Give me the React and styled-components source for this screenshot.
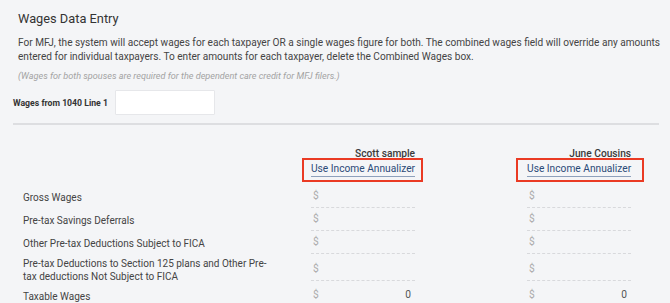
import React from "react";
import styled, { createGlobalStyle } from "styled-components";

const Global = createGlobalStyle`
  html, body { margin: 0; padding: 0; background: #f4f5f7; }
  body { font-family: Roboto, "Liberation Sans", Arial, sans-serif; color: #3b3b3b; }
`;

const Page = styled.div`
  width: 670px;
  height: 303px;
  overflow: hidden;
  box-sizing: border-box;
  padding: 11px 2px 0 13px;
  background: #f4f5f7;
`;

const Intro = styled.div`
  padding-left: 5px;
`;

const Title = styled.h1`
  margin: 0;
  font-size: 12.8px;
  line-height: 16px;
  font-weight: 400;
  color: #333;
`;

const Para = styled.p`
  margin: 9px 0 0;
  width: 648px;
  font-size: 10.1px;
  line-height: 14px;
  color: #444;
`;

const Note = styled.p`
  margin: 6px 0 0;
  font-size: 9.1px;
  line-height: 12px;
  font-style: italic;
  color: #a3a3a3;
`;

const WagesRow = styled.div`
  display: flex;
  align-items: center;
  gap: 7px;
  margin-top: 8px;
`;

const WagesLabel = styled.label`
  font-size: 8.7px;
  font-weight: 700;
  color: #333;
`;

const WagesInput = styled.div`
  width: 98px;
  height: 23px;
  background: #fff;
  border: 1px solid #e6e7ea;
  border-radius: 1px;
`;

const Divider = styled.hr`
  margin: 8px 0 0;
  border: 0;
  height: 2px;
  background: #dddee1;
  width: 646px;
`;

const Table = styled.div`
  margin-top: 22px;
  padding-left: 10px;
`;

const Row = styled.div`
  display: flex;
  align-items: center;
  min-height: 23px;
`;

const HeadRow = styled(Row)`
  margin-bottom: 4px;
`;

const Label = styled.div`
  flex: 0 0 248px;
  margin-right: 40px;
  padding: 2px 0;
  font-size: 10px;
  line-height: 13px;
  color: #444;
`;

const Col = styled.div`
  flex: 0 0 104px;
  & + & { margin-left: 112px; }
`;

const HeadCol = styled(Col)`
  display: flex;
  flex-direction: column;
  align-items: flex-end;
`;

const Name = styled.div`
  font-size: 10.2px;
  line-height: 13px;
  font-weight: 500;
  color: #3a3a3a;
  white-space: nowrap;
`;

const LinkWrap = styled.div`
  position: relative;
  padding: 2px 0 5px;
  &::after {
    content: "";
    position: absolute;
    top: -2px;
    bottom: 0;
    left: ${(p) => p.$l}px;
    right: ${(p) => p.$r}px;
    border: 2px solid #ea3a24;
  }
`;

const Link = styled.a`
  display: block;
  white-space: nowrap;
  font-size: 10.2px;
  line-height: 13px;
  color: #2b4a78;
  text-decoration: none;
  border-bottom: 1px solid #8ea0bb;
  padding-bottom: 1px;
`;

const Amount = styled.div`
  height: 21px;
  box-sizing: border-box;
  border-bottom: 1px dashed #d8d9dc;
  display: flex;
  align-items: center;
  justify-content: space-between;
  padding: 0 4px 3px 2px;
  font-size: 10.2px;
`;

const Dollar = styled.span`
  color: #ababab;
`;

const Value = styled.span`
  color: #555;
`;

const rows = [
  "Gross Wages",
  "Pre-tax Savings Deferrals",
  "Other Pre-tax Deductions Subject to FICA",
  "Pre-tax Deductions to Section 125 plans and Other Pre-tax deductions Not Subject to FICA",
  "Taxable Wages",
];

export default function App() {
  return (
    <Page>
      <Global />
      <Intro>
        <Title>Wages Data Entry</Title>
        <Para>
          For MFJ, the system will accept wages for each taxpayer OR a single wages figure for both. The combined wages field will override any amounts entered for individual taxpayers. To enter amounts for each taxpayer, delete the Combined Wages box.
        </Para>
        <Note>(Wages for both spouses are required for the dependent care credit for MFJ filers.)</Note>
      </Intro>
      <WagesRow>
        <WagesLabel>Wages from 1040 Line 1</WagesLabel>
        <WagesInput />
      </WagesRow>
      <Divider />
      <Table>
        <HeadRow>
          <Label />
          <HeadCol>
            <Name>Scott sample</Name>
            <LinkWrap $l={-9} $r={-8}>
              <Link href="#">Use Income Annualizer</Link>
            </LinkWrap>
          </HeadCol>
          <HeadCol>
            <Name>June Cousins</Name>
            <LinkWrap $l={-11} $r={-13}>
              <Link href="#">Use Income Annualizer</Link>
            </LinkWrap>
          </HeadCol>
        </HeadRow>
        {rows.map((r, i) => (
          <Row key={r}>
            <Label>{r}</Label>
            <Col>
              <Amount>
                <Dollar>$</Dollar>
                {i === 4 && <Value>0</Value>}
              </Amount>
            </Col>
            <Col>
              <Amount>
                <Dollar>$</Dollar>
                {i === 4 && <Value>0</Value>}
              </Amount>
            </Col>
          </Row>
        ))}
      </Table>
    </Page>
  );
}
